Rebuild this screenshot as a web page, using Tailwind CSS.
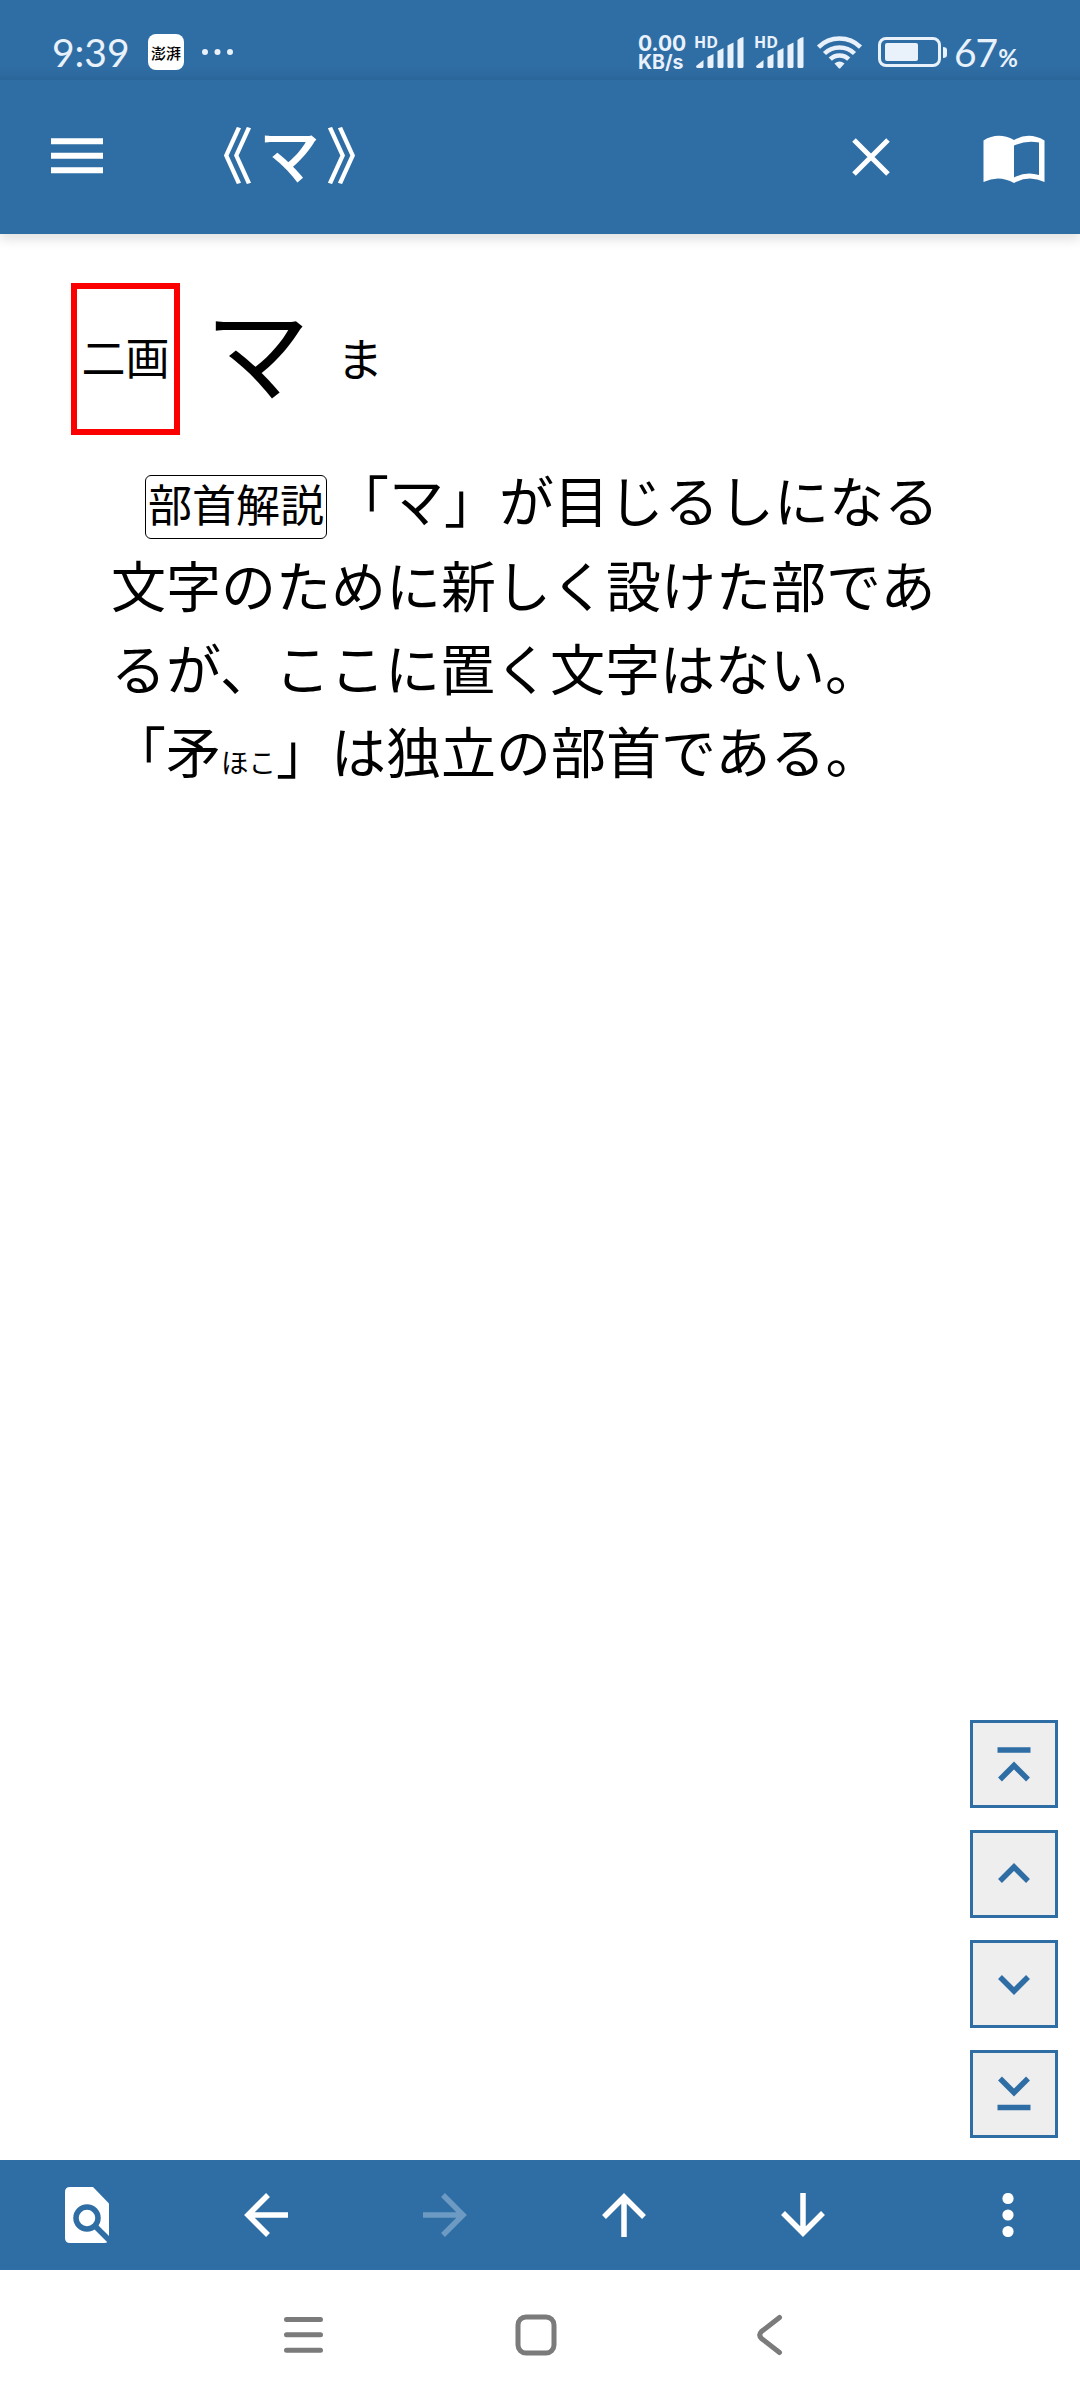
<!DOCTYPE html>
<html lang="ja">
<head>
<meta charset="utf-8">
<title>《マ》</title>
<script src="https://cdn.jsdelivr.net/npm/@tailwindcss/browser@4"></script>
</head>
<body class="bg-white">
<div class="relative flex h-[2400px] w-[1080px] flex-col overflow-hidden bg-white font-['Noto_Sans_CJK_JP',sans-serif] text-black">
  <!-- status bar -->
  <div class="flex h-20 shrink-0 items-start bg-linear-to-b from-[#2f6ea5] from-80% to-[#2c679b] pt-[34px] text-[#e9f1fb]">
    <span class="ml-[52px] w-[96px] whitespace-nowrap font-[Lato] text-[39px] leading-[36px]">9:39</span>
    <span class="flex size-9 items-center justify-center rounded-lg bg-white font-['Noto_Sans_CJK_SC',sans-serif] text-[15px] leading-none font-medium text-black">澎湃</span>
    <svg class="ml-[17px] h-9 w-[34px]" viewBox="0 0 34 36" fill="currentColor"><circle cx="4" cy="18" r="3"/><circle cx="16.500" cy="18" r="3"/><circle cx="29" cy="18" r="3"/></svg>
    <span class="ml-[403px] flex w-[56px] flex-col font-[Inter] text-[21px] leading-[19px] font-bold whitespace-nowrap"><span>0.00</span><span class="text-[19.500px]">KB/s</span></span>
    <svg class="h-9 w-[60px] overflow-visible" viewBox="0 0 60 36" fill="currentColor"><text x="0" y="14" font-family="Open Sans" font-size="16" font-weight="700" textLength="24" lengthAdjust="spacingAndGlyphs">HD</text><path d="M2 32q0 2 1.500 2h4.500q1.500 0 1.500-1.500v-6.500zM13.500 23l6-3v12.500q0 1.500-1.500 1.500h-3q-1.500 0-1.500-1.500zM23.500 17l6-3v18.500q0 1.500-1.500 1.500h-3q-1.500 0-1.500-1.500zM33.500 11.500l6-3v24q0 1.500-1.500 1.500h-3q-1.500 0-1.500-1.500zM43.500 6q2.500-2.500 6-3v29.500q0 1.500-1.500 1.500h-3q-1.500 0-1.500-1.500z"/></svg>
    <svg class="h-9 w-[62px] overflow-visible" viewBox="0 0 62 36" fill="currentColor"><text x="0" y="14" font-family="Open Sans" font-size="16" font-weight="700" textLength="24" lengthAdjust="spacingAndGlyphs">HD</text><path d="M2 32q0 2 1.500 2h4.500q1.500 0 1.500-1.500v-6.500zM13.500 23l6-3v12.500q0 1.500-1.500 1.500h-3q-1.500 0-1.500-1.500zM23.500 17l6-3v18.500q0 1.500-1.500 1.500h-3q-1.500 0-1.500-1.500zM33.500 11.500l6-3v24q0 1.500-1.500 1.500h-3q-1.500 0-1.500-1.500zM43.500 6q2.500-2.500 6-3v29.500q0 1.500-1.500 1.500h-3q-1.500 0-1.500-1.500z"/></svg>
    <svg class="h-9 w-[50px]" viewBox="0 0 50 36" fill="none" stroke="currentColor" stroke-width="4.500"><path d="M2.500 13.200a30 30 0 0 1 42 0M8.500 19.500a21.500 21.500 0 0 1 30 0M14.300 25.200a13 13 0 0 1 18.400 0"/><path d="M18.500 29.500q5-4 10 0L24.500 34q-1 1-2 0z" fill="currentColor" stroke="none"/></svg>
    <svg class="ml-[11px] h-9 w-[72px]" viewBox="0 0 72 36"><rect x="2.500" y="4.500" width="60" height="27" rx="6.500" fill="none" stroke="currentColor" stroke-width="3"/><rect x="8" y="9" width="33" height="18" rx="2" fill="currentColor"/><path d="M66 13q4 0 4 3v5q0 3-4 3z" fill="currentColor"/></svg>
    <span class="ml-[5px] flex items-baseline font-[Lato] text-[39px] leading-[36px] tracking-[-1px]">67<span class="ml-[1px] text-[24px] font-bold">%</span></span>
  </div>
  <!-- app bar -->
  <header class="flex h-[154px] shrink-0 items-center bg-[#2f6ea5] text-white shadow-[0_6px_10px_rgba(0,0,0,0.11)]">
    <svg class="mb-[3px] ml-[51px] h-9 w-[52px]" viewBox="0 0 52 36" fill="currentColor"><path d="M0 .3h52v6H0zM0 14.700h52v6H0zM0 29.300h52v6H0z"/></svg>
    <h1 class="mb-[9px] ml-[89px] w-[203px] text-[61px] leading-[80px] font-medium tracking-[6px] whitespace-nowrap">《マ》</h1>
    <svg class="ml-[456px] size-[40px]" viewBox="0 0 40 40" fill="none" stroke="currentColor" stroke-width="5"><path d="M3 3l34 34M37 3L3 37"/></svg>
    <svg class="mt-[4px] ml-[92px] h-[48px] w-[62px]" viewBox="0 0 62 48"><path fill="currentColor" d="M.5 5.500Q15-3.500 31 5Q46-3.500 61.500 5.500V47Q46 39.500 31 48Q16 39.500.5 47z"/><path fill="#2f6ea5" d="M31 10.500Q43 5 56 7.500V40Q43 36 31 42.500z"/></svg>
  </header>
  <!-- entry -->
  <main class="flex-1 pt-[49px]">
    <div class="flex h-[152px] items-center pl-[71px]">
      <div class="flex h-[152px] w-[109px] items-center justify-center border-6 border-[#fb0000] pb-[6px] text-[44px] leading-none whitespace-nowrap">二画</div>
      <span class="mb-[24px] ml-[25px] h-[152px] w-[113px] text-[105px] leading-[152px]">マ</span>
      <span class="mb-[6px] ml-[19px] text-[46px] leading-none">ま</span>
    </div>
    <div class="mt-[22px] pl-[111px] text-[55px] leading-[83px] whitespace-nowrap">
      <p class="flex h-[85px] items-start pl-[34px]"><span class="mt-[18px] mr-[7px] flex h-16 w-[182px] items-center justify-center rounded-md border border-black pb-[8px] text-[44px] leading-none">部首解説</span><span>「マ」が目じるしになる</span></p>
      <p>文字のために新しく設けた部であ</p>
      <p>るが、ここに置く文字はない。</p>
      <p>「矛<span class="text-[27.500px]">ほこ</span>」は独立の部首である。</p>
    </div>
  </main>
  <!-- scroll buttons -->
  <nav class="absolute top-[1720px] right-[22px] flex flex-col gap-[22px] text-[#2f6ea5]">
    <button class="size-[88px] border-3 border-current bg-[#eeeeee]"><svg class="size-full" viewBox="0 0 82 82" fill="none" stroke="currentColor" stroke-width="5.500"><path d="M24.500 27h33M27 56.500l14-14 14 14"/></svg></button>
    <button class="size-[88px] border-3 border-current bg-[#eeeeee]"><svg class="size-full" viewBox="0 0 82 82" fill="none" stroke="currentColor" stroke-width="5.500"><path d="M27 48l14-14 14 14"/></svg></button>
    <button class="size-[88px] border-3 border-current bg-[#eeeeee]"><svg class="size-full" viewBox="0 0 82 82" fill="none" stroke="currentColor" stroke-width="5.500"><path d="M27 34l14 14 14-14"/></svg></button>
    <button class="size-[88px] border-3 border-current bg-[#eeeeee]"><svg class="size-full" viewBox="0 0 82 82" fill="none" stroke="currentColor" stroke-width="5.500"><path d="M27 25.500l14 14 14-14M24.500 54.500h33"/></svg></button>
  </nav>
  <!-- toolbar -->
  <footer class="flex h-[110px] shrink-0 items-center bg-[#2f6ea5] text-white">
    <svg class="ml-[65px] h-[56px] w-[44px]" viewBox="0 0 44 56"><path fill="currentColor" d="M5 0h23l16 16.500V51q0 5-5 5H5q-5 0-5-5V5q0-5 5-5z"/><g fill="none" stroke="#2f6ea5" stroke-width="5.500"><circle cx="22" cy="31" r="11"/><path d="M30 39l16 16"/></g></svg>
    <svg class="ml-[135px] size-11" viewBox="0 0 44 44" fill="none" stroke="currentColor" stroke-width="5.500"><path d="M44 22H5M24 2L4 22l20 20"/></svg>
    <svg class="ml-[135px] size-11 text-[#6d9ac2]" viewBox="0 0 44 44" fill="none" stroke="currentColor" stroke-width="5.500"><path d="M0 22h39M20 2l20 20-20 20"/></svg>
    <svg class="ml-[135px] size-11" viewBox="0 0 44 44" fill="none" stroke="currentColor" stroke-width="5.500"><path d="M22 44V5M2 24L22 4l20 20"/></svg>
    <svg class="ml-[135px] size-11" viewBox="0 0 44 44" fill="none" stroke="currentColor" stroke-width="5.500"><path d="M22 0v39M2 20l20 20 20-20"/></svg>
    <svg class="ml-[177px] h-11 w-3" viewBox="0 0 12 44" fill="currentColor"><circle cx="6" cy="5.500" r="5.600"/><circle cx="6" cy="22" r="5.600"/><circle cx="6" cy="38.500" r="5.600"/></svg>
  </footer>
  <!-- system navigation -->
  <div class="flex h-[130px] shrink-0 items-center text-[#7b7b7b]">
    <svg class="ml-[284px] h-[42px] w-[39px]" viewBox="0 0 39 42" fill="none" stroke="currentColor" stroke-width="5" stroke-linecap="round"><path d="M2.500 5.500h34M2.500 20.800h34M2.500 36.200h34"/></svg>
    <svg class="ml-[192px] size-[42px]" viewBox="0 0 42 42" fill="none" stroke="currentColor" stroke-width="5"><rect x="3" y="3" width="36" height="36" rx="8"/></svg>
    <svg class="ml-[200px] h-[42px] w-[26px]" viewBox="0 0 26 42" fill="none" stroke="currentColor" stroke-width="5" stroke-linecap="round"><path d="M22.500 3.500L4.500 17.500Q1 21 4.500 24.500L22.500 38.500"/></svg>
  </div>
</div>
</body>
</html>
